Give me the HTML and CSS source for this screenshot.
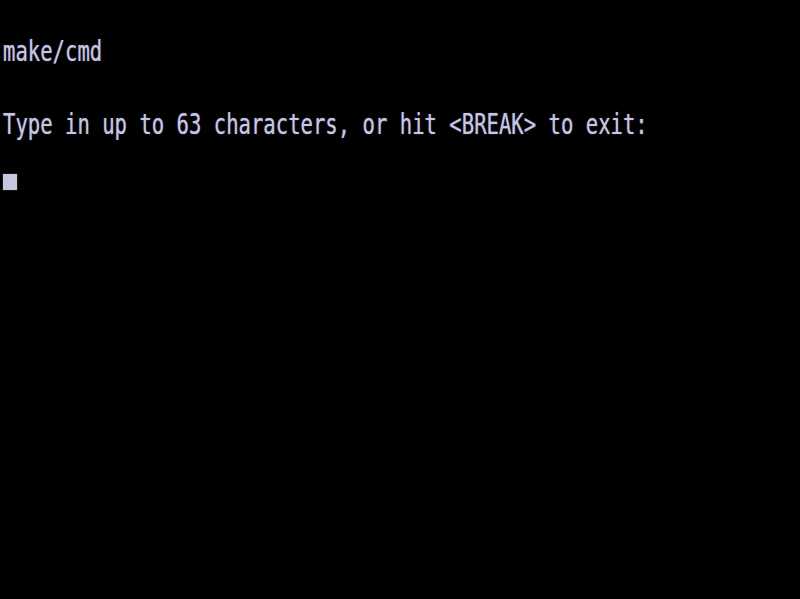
FILE: index.html
```html
<!DOCTYPE html>
<html>
<head>
<meta charset="utf-8">
<link rel="stylesheet" href="styles.css">
</head>
<body>
<div class="screen">
  <div class="line"><span class="glyphs">make/cmd</span></div>
  <div class="line prompt"><span class="glyphs">Type in up to 63 characters, or hit &lt;BREAK&gt; to exit:</span></div>
  <div class="cursor"></div>
</div>
</body>
</html>
```
FILE: styles.css
```css
html, body {
  margin: 0;
  padding: 0;
  background: #000;
  height: 100%;
}
.screen {
  padding: 34px 0 0 3px;
  font-family: "DejaVu Sans Mono", "Liberation Mono", monospace;
  font-size: 20.6px;
  color: #c6c6e6;
  text-shadow: 0 0 1px rgba(198, 198, 230, 0.6);
}
.line {
  height: 24px;
  line-height: 24px;
  white-space: pre;
}
.glyphs {
  display: inline-block;
  transform: scaleY(1.4);
  transform-origin: 0 0;
}
.prompt {
  margin-top: 49px;
}
.cursor {
  margin-top: 43px;
  width: 14px;
  height: 16px;
  background: #c6c6e0;
  box-shadow: 0 0 1px rgba(198, 198, 224, 0.7);
}
```
